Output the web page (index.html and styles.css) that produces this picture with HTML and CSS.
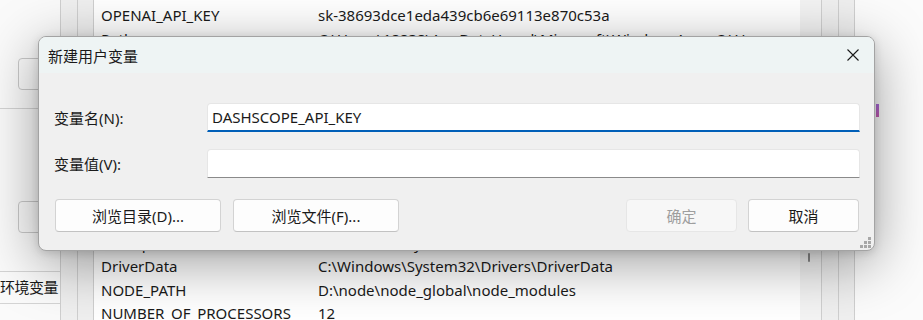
FILE: index.html
```html
<!DOCTYPE html>
<html lang="zh-CN">
<head>
  <meta charset="UTF-8">
  <title>新建用户变量</title>
  <link rel="stylesheet" href="styles.css">
</head>
<body>

<!-- 后面的环境变量窗口 -->
<div class="desk">
  <div class="side">
    <div class="side-btn"></div>
    <div class="side-line"></div>
    <div class="side-btn second"></div>
    <div class="side-item">环境变量</div>
  </div>
  <div class="strip"></div>
  <div class="strip"></div>
  <div class="list">
    <div class="row"><span class="name">OPENAI_API_KEY</span><span class="value">sk-38693dce1eda439cb6e69113e870c53a</span></div>
    <div class="row"><span class="name">Path</span><span class="value">C:\Users\18838\AppData\Local\Microsoft\WindowsApps;C:\Users</span></div>
    <div class="gap"></div>
    <div class="row"><span class="name">ComSpec</span><span class="value">C:\Windows\system32\cmd.exe</span></div>
    <div class="row"><span class="name">DriverData</span><span class="value">C:\Windows\System32\Drivers\DriverData</span></div>
    <div class="row"><span class="name">NODE_PATH</span><span class="value">D:\node\node_global\node_modules</span></div>
    <div class="row"><span class="name">NUMBER_OF_PROCESSORS</span><span class="value">12</span></div>
  </div>
  <div class="scroll"><div class="thumb"></div></div>
  <div class="strip"></div>
  <div class="strip"></div>
  <div class="rest"><div class="accent"></div></div>
</div>

<!-- 对话框 -->
<div class="dialog">
  <div class="titlebar">
    <span class="title">新建用户变量</span>
    <svg class="close" width="12" height="12" viewBox="0 0 12 12">
      <path d="M0.5 0.5 L11.5 11.5 M11.5 0.5 L0.5 11.5" stroke="#1a1a1a" stroke-width="1.1" fill="none"/>
    </svg>
  </div>
  <div class="dialog-body">
    <div class="fields">
      <label class="label">变量名(N):</label>
      <div class="input focused">DASHSCOPE_API_KEY</div>
      <label class="label">变量值(V):</label>
      <div class="input"></div>
    </div>
    <div class="buttons">
      <button class="btn wide">浏览目录(D)...</button>
      <button class="btn wide">浏览文件(F)...</button>
      <div class="spacer"></div>
      <button class="btn disabled">确定</button>
      <button class="btn">取消</button>
    </div>
  </div>
  <svg class="grip" width="12" height="12" viewBox="0 0 12 12">
    <rect x="8" y="0" width="3" height="3" fill="#a8a8a8"/>
    <rect x="4" y="4" width="3" height="3" fill="#a8a8a8"/>
    <rect x="8" y="4" width="3" height="3" fill="#a8a8a8"/>
    <rect x="0" y="8" width="3" height="3" fill="#a8a8a8"/>
    <rect x="4" y="8" width="3" height="3" fill="#a8a8a8"/>
    <rect x="8" y="8" width="3" height="3" fill="#a8a8a8"/>
  </svg>
</div>

</body>
</html>
```

FILE: styles.css
```css
* { margin: 0; padding: 0; box-sizing: border-box; }
body {
  width: 923px;
  height: 320px;
  overflow: hidden;
  background: #fff;
  color: #1a1a1a;
  font-family: "Noto Sans", "Noto Sans CJK SC", sans-serif;
  font-size: 15px;
}

/* background window */
.desk {
  display: flex;
  height: 320px;
}
.side {
  width: 60px;
  display: flex;
  flex-direction: column;
  background: #fafafa;
  overflow: hidden;
}
.side > * { flex-shrink: 0; }
.side-btn {
  margin: 58px 0 0 18px;
  width: 60px;
  height: 32px;
  border: 1px solid #c9c9c9;
  border-radius: 4px;
}
.side-btn.second { margin-top: 92px; }
.side-line {
  margin-top: 18px;
  border-top: 1px solid #d4d4d4;
}
.side-item {
  margin-top: 38px;
  height: 33px;
  line-height: 31px;
  border-top: 1px solid #d4d4d4;
  border-bottom: 1px solid #d4d4d4;
  white-space: nowrap;
  letter-spacing: -0.5px;
}
.strip {
  width: 17px;
  border-left: 1px solid #cfcfcf;
  background: #efefef;
}
.strip + .strip { width: 16px; }
.list {
  width: 707px;
  border-left: 1px solid #cfcfcf;
  background: #fff;
  padding: 4px 0 0 7px;
  display: flex;
  flex-direction: column;
  overflow: hidden;
}
.list > * { flex-shrink: 0; }
.row {
  height: 23.5px;
  line-height: 23.5px;
  display: flex;
  white-space: nowrap;
}
.row .name { width: 217px; }
.gap { height: 180.5px; }
.scroll {
  width: 21px;
  background: #f3f3f3;
  padding: 253px 0 0 8px;
}
.thumb {
  width: 2px;
  height: 9px;
  border-radius: 1px;
  background: #8a8a8a;
}
.rest {
  flex: 1;
  border-left: 1px solid #cfcfcf;
  background: #fbfbfb;
}
.accent {
  margin: 104px 0 0 21px;
  width: 3px;
  height: 13px;
  background: linear-gradient(#a86ad8, #c45ab0);
}

/* dialog */
.dialog {
  position: absolute;
  left: 38px;
  top: 36px;
  width: 837px;
  height: 215px;
  border: 1px solid #a3a3a3;
  border-radius: 8px;
  background: #f0f0f0;
  overflow: hidden;
  box-shadow: 0 12px 56px rgba(0, 0, 0, 0.38), 0 2px 10px rgba(0, 0, 0, 0.14);
}
.titlebar {
  height: 36px;
  background: #eef4f4;
  display: flex;
  align-items: center;
  justify-content: space-between;
  padding: 0 15px 0 9px;
}
.title { font-size: 15px; }
.dialog-body {
  padding: 30px 14px 0 15px;
}
.fields {
  display: grid;
  grid-template-columns: 153px 1fr;
  grid-auto-rows: 29px;
  row-gap: 17px;
  align-items: center;
}
.label { font-size: 15px; }
.input {
  height: 29px;
  background: #fff;
  border: 1px solid #e6e6e6;
  border-bottom: 1px solid #8a8a8a;
  border-radius: 4px 4px 0 0;
  padding: 0 4px;
  line-height: 26px;
  font-size: 15px;
}
.input.focused { border-bottom: 2px solid #005fb8; }
.buttons {
  display: flex;
  gap: 12px;
  margin: 21px 1px 0 1px;
}
.spacer { flex: 1; }
.btn {
  width: 111px;
  height: 33px;
  background: #fdfdfd;
  border: 1px solid #d3d3d3;
  border-bottom-color: #c2c2c2;
  border-radius: 4px;
  font-family: inherit;
  font-size: 15px;
  color: #1a1a1a;
}
.btn.wide { width: 166px; }
.btn.disabled {
  background: #f7f7f7;
  border-color: #e6e6e6;
  color: #9e9e9e;
  margin-right: -1px;
}
.grip {
  position: absolute;
  right: 2px;
  bottom: 1px;
}
```
